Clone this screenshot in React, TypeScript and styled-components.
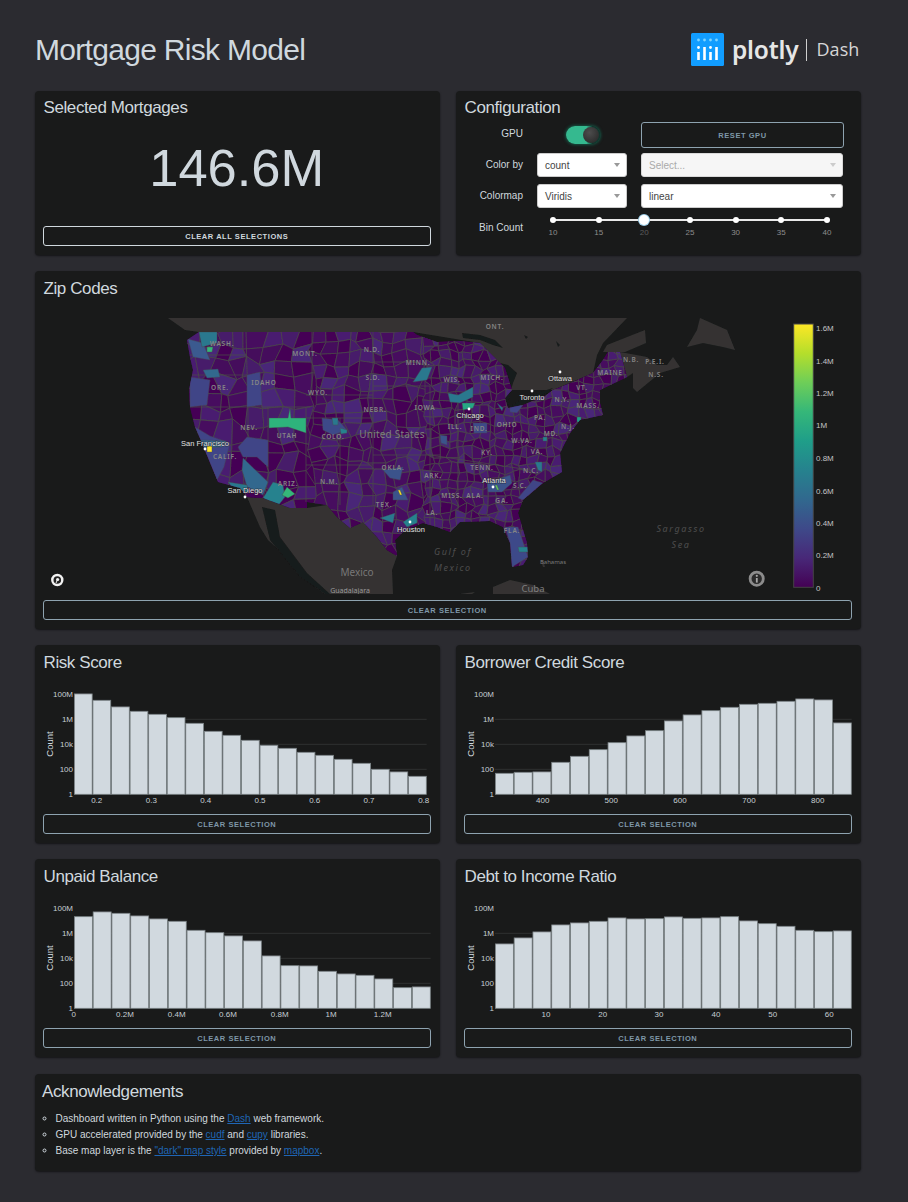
import React, { useMemo } from 'react';
import styled, { createGlobalStyle } from 'styled-components';

const FONT = `"Liberation Sans", Arial, sans-serif`;
const TEXT = '#d0d8de';

const GlobalStyle = createGlobalStyle`
  html, body {
    margin: 0;
    padding: 0;
    background: #2b2b30;
    font-family: ${FONT};
    color: ${TEXT};
  }
`;

const Page = styled.div`
  box-sizing: border-box;
  width: 908px;
  min-height: 1202px;
  padding: 33px 47.5px 31px 35px;
`;

const Header = styled.header`
  display: flex;
  align-items: center;
  justify-content: space-between;
  height: 33px;
  margin-bottom: 25px;
`;

const PageTitle = styled.h1`
  margin: 0;
  font-size: 30px;
  font-weight: 400;
  letter-spacing: -0.7px;
  color: ${TEXT};
`;

const Logo = styled.div`
  display: flex;
  align-items: center;
`;

const LogoMark = styled.svg`
  width: 33px;
  height: 33px;
  margin-right: 8px;
`;

const LogoWord = styled.span`
  font-family: "Noto Sans", sans-serif;
  font-size: 24.5px;
  line-height: 33px;
  font-weight: 600;
  letter-spacing: -0.2px;
  color: #e6e6e6;
`;

const LogoDivider = styled.span`
  width: 1px;
  height: 22px;
  margin: 0 9px 0 8px;
  background: #cfcfcf;
`;

const LogoProduct = styled.span`
  font-family: "Open Sans", sans-serif;
  font-size: 18px;
  line-height: 33px;
  color: #d6d6d6;
  letter-spacing: 0.1px;
  margin-right: 1px;
`;

const Grid = styled.main`
  display: grid;
  grid-template-columns: 404.5px 404.5px;
  gap: 16px 16.5px;
`;

const Card = styled.section<{ $wide?: boolean; $height: number }>`
  box-sizing: border-box;
  grid-column: ${({ $wide }) => ($wide ? '1 / span 2' : 'auto')};
  height: ${({ $height }) => $height}px;
  padding: 0 9px 0 8px;
  display: flex;
  flex-direction: column;
  background: #191a1a;
  border-radius: 4px;
  box-shadow: 0 1px 2px rgba(0, 0, 0, 0.55);
`;

const CardTitle = styled.h4<{ $low?: boolean }>`
  margin: 0;
  height: 32px;
  padding-left: 0.5px;
  font-size: 17px;
  line-height: ${({ $low }) => ($low ? 36 : 34)}px;
  font-weight: 400;
  letter-spacing: -0.4px;
  color: ${TEXT};
  flex: none;
`;

const BigNumber = styled.div`
  flex: 1;
  display: flex;
  align-items: center;
  justify-content: center;
  padding-bottom: 14px;
  font-size: 52.5px;
  color: ${TEXT};
`;

const ActionButton = styled.button<{ $muted?: boolean; $height?: number; $bottom?: number }>`
  box-sizing: border-box;
  display: block;
  width: 100%;
  height: ${({ $height }) => $height ?? 20}px;
  margin-bottom: ${({ $bottom }) => $bottom ?? 0}px;
  padding: 0;
  flex: none;
  background: transparent;
  border: 1px solid ${({ $muted }) => ($muted ? '#8ea3b0' : '#d0d8de')};
  border-radius: 3px;
  font-family: ${FONT};
  font-size: 7.5px;
  font-weight: 700;
  letter-spacing: 0.55px;
  text-transform: uppercase;
  color: ${({ $muted }) => ($muted ? '#7f97a8' : '#d0d8de')};
`;

const ConfigGrid = styled.div`
  margin-top: -1px;
  display: grid;
  grid-template-columns: 58px 90px 203px;
  grid-template-rows: repeat(4, 31px);
  column-gap: 14px;
  padding-left: 1px;
`;

const RowLabel = styled.label<{ $lh?: number }>`
  font-size: 10px;
  line-height: ${({ $lh }) => $lh ?? 24}px;
  text-align: right;
  white-space: nowrap;
  color: ${TEXT};
`;

const ToggleCell = styled.div`
  display: flex;
  justify-content: center;
  padding: 4px 0 0 2px;
`;

const Toggle = styled.span`
  position: relative;
  box-sizing: border-box;
  display: block;
  width: 34px;
  height: 18px;
  border-radius: 9px;
  background: linear-gradient(90deg, #35b98f 0 60%, #0e3a30 78%);
  box-shadow: 0 0 3px 1px rgba(20, 110, 85, 0.7);
`;

const ToggleKnob = styled.span`
  position: absolute;
  top: 1px;
  right: 1px;
  width: 16px;
  height: 16px;
  border-radius: 50%;
  background: radial-gradient(circle at 40% 35%, #4d4d4d, #232323);
`;

const SelectBox = styled.div<{ $disabled?: boolean; $long?: boolean }>`
  box-sizing: border-box;
  display: flex;
  align-items: center;
  justify-content: space-between;
  width: ${({ $long }) => ($long ? '202px' : '100%')};
  height: 24px;
  padding: 0 6px 0 7px;
  font-size: 10px;
  background: ${({ $disabled }) => ($disabled ? '#f6f6f6' : '#fff')};
  border: 1px solid ${({ $disabled }) => ($disabled ? '#d9d9d9' : '#ccc')};
  border-radius: 3px;
  color: ${({ $disabled }) => ($disabled ? '#aaa' : '#444')};

  &::after {
    content: '';
    border-style: solid;
    border-width: 4px 3.5px 0;
    border-color: ${({ $disabled }) => ($disabled ? '#ccc' : '#999')} transparent transparent;
  }
`;

const SliderCell = styled.div`
  grid-column: 2 / span 2;
  padding: 5px 17px 0 16px;
`;

const SliderStops = styled.div`
  position: relative;
  display: flex;
  justify-content: space-between;
  height: 1px;

  &::before {
    content: '';
    position: absolute;
    left: 0;
    right: 0;
    top: -1px;
    height: 2px;
    background: #e9e9e9;
  }
`;

const SliderStop = styled.div`
  position: relative;
  width: 0;
`;

const SliderDot = styled.span<{ $active?: boolean }>`
  position: absolute;
  box-sizing: border-box;
  width: ${({ $active }) => ($active ? 10 : 6)}px;
  height: ${({ $active }) => ($active ? 10 : 6)}px;
  left: ${({ $active }) => ($active ? -5 : -3)}px;
  top: ${({ $active }) => ($active ? -5.5 : -3.5)}px;
  border-radius: 50%;
  background: #fff;
  box-shadow: ${({ $active }) => ($active ? '0 0 0 1px #9fd0ea' : 'none')};
`;

const SliderMark = styled.span<{ $active?: boolean }>`
  position: absolute;
  top: 8px;
  left: -10px;
  width: 20px;
  text-align: center;
  font-size: 8px;
  line-height: 10px;
  color: ${({ $active }) => ($active ? '#5c5c5c' : '#8d8d8d')};
`;

const MapFrame = styled.svg`
  display: block;
  width: 808.5px;
  height: 276px;
  margin-top: 15px;
  margin-bottom: 6px;
  flex: none;
`;

const ChartFrame = styled.svg`
  display: block;
  width: 388.5px;
  height: 124px;
  margin-top: 7px;
  margin-bottom: 6px;
  flex: none;
  overflow: visible;
`;

const AckCard = styled.section`
  grid-column: 1 / span 2;
  box-sizing: border-box;
  height: 97px;
  margin-top: 1px;
  padding: 1px 7px 0;
  background: #191a1a;
  border-radius: 4px;
  box-shadow: 0 1px 2px rgba(0, 0, 0, 0.55);
`;

const AckTitle = styled(CardTitle)`
  padding-left: 0;
`;

const AckList = styled.ul`
  margin: 4px 0 0;
  padding: 0 0 0 13.5px;
  list-style: circle;
  font-size: 10px;
  line-height: 16px;
  color: ${TEXT};
`;

const AckLink = styled.a`
  color: #1f66b5;
  text-decoration: underline;
`;

const VIRIDIS = ['#440154', '#482878', '#3e4989', '#31688e', '#26828e', '#1f9e89', '#35b779', '#6ece58', '#b5de2b', '#fde725'];

const US_OUTLINE =
  '199,332 187,340 190,357 193,370 189,390 190,407 195,427 202,443 210,463 218,482 240,488 247,497 263,498 290,508 307,508 307,502 327,505 337,517 350,528 363,522 377,537 387,550 397,556 395,540 405,530 423,523 437,527 450,532 460,522 490,521 503,527 510,543 512,567 523,565 528,557 527,543 518,513 523,500 543,483 562,472 560,453 570,433 580,420 603,415 600,403 600,390 627,377 620,352 608,352 603,360 593,373 573,382 553,390 545,396 523,405 508,408 505,398 512,390 505,368 480,343 460,341 437,342 417,335 413,332';

const LAND = [
  // canada
  '168,318 185,330 199,332 413,332 480,343 512,390 553,390 593,373 597,355 603,343 627,318',
  '603,352 607,345 645,330 646,343 625,352',
  '620,352 647,357 657,365 667,365 673,357 680,367 660,373 637,392 633,388 633,373 627,377',
  '700,318 727,330 735,350 723,347 703,343 687,347 697,330',
  // mexico with baja
  '247,497 263,498 290,508 307,508 327,505 337,517 350,528 363,522 377,537 387,550 397,556 392,570 393,594 325,594 303,578 288,558 268,540 260,527',
  // cuba, yucatan, bahamas
  '493,587 510,580 533,585 550,594 493,594',
  '460,594 475,592 472,594',
  '541,560 543,560 545,567 543,567',
];

const WATER = [
  // superior, huron, erie and ontario
  '462,333 480,335 495,340 503,348 493,345 480,340 463,338',
  '500,363 508,365 517,373 513,383 510,393 508,405 505,408 504,397 507,383 505,373',
  '508,408 520,400 530,395 553,388 547,393 527,402 515,408',
  // small lakes up north
  '556,341 560,345 558,347',
  '524,335 528,337 526,339',
  // gulf of california
  '262,507 275,510 280,537 307,573 330,594 325,594 300,577 270,540',
];

const PATCHES: [string, string][] = [
  ['190,377 210,380 207,405 190,407', '#414487'],
  ['188,339 203,343 210,360 193,357', '#3b5a8f'],
  ['199,332 217,332 217,343 202,347', '#2a788e'],
  ['207,347 213,347 212,352 207,352', '#35b779'],
  ['203,370 218,369 220,377 207,378', '#31688e'],
  ['247,375 260,372 262,405 247,407', '#414487'],
  ['195,427 210,436 230,443 224,467 217,480 210,463', '#414487'],
  ['238,447 247,437 268,440 268,467 257,457 243,457', '#414487'],
  ['243,458 268,482 263,495 247,487 242,470', '#31688e'],
  ['200,440 226,441 222,447 204,448', '#31688e'],
  ['207,446 212,446 212,452 207,452', '#fde725'],
  ['228,482 247,485 248,493 232,487', '#2a788e'],
  ['269,418 288,418 290,408 291,418 306,418 306,433 288,427 269,428', '#2eb37c'],
  ['263,498 273,482 283,485 285,497 277,507', '#26828e'],
  ['282,495 287,487 295,494 288,498', '#35b779'],
  ['322,418 338,420 347,430 333,435 323,430', '#3e4989'],
  ['332,418 338,418 338,425 333,425', '#2a788e'],
  ['340,428 347,430 347,433 341,434', '#26828e'],
  ['413,382 422,368 432,367 427,380', '#2a788e'],
  ['448,393 458,395 473,387 473,397 460,403 450,402', '#2a788e'],
  ['462,403 475,403 473,408 463,410', '#26a784'],
  ['440,435 447,436 447,445 441,443', '#3b528b'],
  ['473,423 487,423 487,433 474,433', '#3e4989'],
  ['383,470 403,467 400,480 390,478', '#3b528b'],
  ['393,492 402,487 408,500 393,500', '#3b528b'],
  ['398,490 400,490 402,495 400,495', '#fde725'],
  ['380,518 395,513 393,523', '#2a788e'],
  ['403,522 417,513 417,523 407,527', '#26828e'],
  ['487,483 510,475 512,483 502,492 488,492', '#3b528b'],
  ['495,485 497,485 499,490 497,490', '#5ec962'],
  ['535,462 542,462 542,472 538,470', '#2a788e'],
  ['523,500 543,483 533,480 518,498', '#414487'],
  ['505,527 518,527 528,557 512,567 510,543', '#3e4989'],
  ['518,547 528,547 528,552 519,552', '#26828e'],
  ['577,417 581,417 581,422 577,422', '#1f9e89'],
  ['543,437 547,437 547,441 543,441', '#26828e'],
  ['497,403 503,408 502,411', '#2a788e'],
  ['510,405 523,405 517,413 510,412', '#414487'],
];

const BORDERS = [
  '246,332 248,407', '190,407 310,407', '248,407 248,447 268,467', '268,407 268,482 263,498', '306,408 306,502',
  '306,418 373,418', '306,395 373,395', '312,332 312,395', '373,332 373,505', '373,362 417,362', '373,386 430,386',
  '306,465 373,465', '340,418 340,505', '373,455 440,455', '430,386 430,525', '430,455 530,470', '458,395 458,510',
  '190,375 247,375', '190,355 247,355',
];

const STATE_LABELS: [string, number, number][] = [
  ['WASH.', 222, 343], ['MONT.', 305, 353], ['N.D.', 372, 349], ['MINN.', 418, 362], ['S.D.', 373, 377],
  ['IDAHO', 264, 382], ['ORE.', 220, 387], ['WYO.', 318, 392], ['WIS.', 452, 379], ['NEBR.', 375, 409],
  ['IOWA', 425, 407], ['NEV.', 249, 427], ['UTAH', 287, 435], ['COLO.', 333, 436], ['ILL.', 455, 426],
  ['CALIF.', 225, 456], ['OKLA.', 393, 467], ['ARK.', 433, 475], ['N.M.', 329, 481], ['ARIZ.', 288, 483],
  ['MISS.', 452, 495], ['TEX.', 384, 504], ['LA.', 432, 512], ['ALA.', 475, 495], ['GA.', 502, 500],
  ['TENN.', 482, 467], ['KY.', 487, 452], ['IND.', 479, 428], ['OHIO', 507, 424], ['MICH.', 492, 377],
  ['S.C.', 520, 485], ['N.C.', 531, 470], ['VA.', 537, 451], ['W.VA.', 522, 440], ['MD.', 551, 433],
  ['N.J.', 568, 426], ['PA.', 540, 417], ['N.Y.', 562, 399], ['MASS.', 588, 405], ['VT.', 582, 387],
  ['MAINE', 610, 372], ['N.B.', 631, 359], ['P.E.I.', 655, 361], ['N.S.', 656, 374], ['ONT.', 495, 326],
  ['FLA.', 512, 530],
];

const CITIES: [string, number, number, number, number][] = [
  ['San Francisco', 205, 446, 205, 449],
  ['San Diego', 245, 493, 245, 497],
  ['Houston', 411, 532, 410, 522],
  ['Chicago', 470, 418, 469, 409],
  ['Atlanta', 494, 483, 493, 487],
  ['Toronto', 532, 400, 532, 391],
  ['Ottawa', 560, 381, 560, 372],
];

const COLORBAR_TICKS: [string, number][] = [
  ['1.6M', 328], ['1.4M', 360.5], ['1.2M', 393], ['1M', 425], ['0.8M', 458],
  ['0.6M', 490.5], ['0.4M', 522.5], ['0.2M', 555], ['0', 587.5],
];

const CELL_PURPLES = ['#440154', '#440154', '#440154', '#450a5c', '#46105f', '#46105f', '#471a6b', '#481f70', '#482878'];

const makeCells = () => {
  let seed = 20190414;
  const rand = () => {
    seed = (seed + 0x6d2b79f5) | 0;
    let t = Math.imul(seed ^ (seed >>> 15), 1 | seed);
    t = (t + Math.imul(t ^ (t >>> 7), 61 | t)) ^ t;
    return ((t ^ (t >>> 14)) >>> 0) / 4294967296;
  };
  const cells: { points: string; fill: string }[] = [];
  const regions = [
    { x0: 184, x1: 312, y0: 328, y1: 512, step: 16 },
    { x0: 312, x1: 425, y0: 328, y1: 560, step: 12 },
    { x0: 425, x1: 632, y0: 328, y1: 572, step: 8 },
  ];
  regions.forEach(({ x0, x1, y0, y1, step }) => {
    const cols = Math.ceil((x1 - x0) / step);
    const rows = Math.ceil((y1 - y0) / step);
    const vx: [number, number][][] = [];
    for (let i = 0; i <= cols; i++) {
      vx[i] = [];
      for (let j = 0; j <= rows; j++) {
        vx[i][j] = [x0 + i * step + (rand() - 0.5) * step * 0.75, y0 + j * step + (rand() - 0.5) * step * 0.75];
      }
    }
    for (let i = 0; i < cols; i++) {
      for (let j = 0; j < rows; j++) {
        const p = [vx[i][j], vx[i + 1][j], vx[i + 1][j + 1], vx[i][j + 1]];
        cells.push({
          points: p.map((v) => `${v[0].toFixed(1)},${v[1].toFixed(1)}`).join(' '),
          fill: CELL_PURPLES[Math.floor(rand() * CELL_PURPLES.length)],
        });
      }
    }
  });
  return cells;
};

const ZipMap = () => {
  const cells = useMemo(makeCells, []);

  return (
    <MapFrame viewBox="43 318 808.5 276">
      <defs>
        <clipPath id="us-clip">
          <polygon points={US_OUTLINE} />
        </clipPath>
        <filter id="soft" x="0" y="0" width="1" height="1">
          <feGaussianBlur stdDeviation="0.5" />
        </filter>
        <linearGradient id="viridis" x1="0" y1="1" x2="0" y2="0">
          {VIRIDIS.map((c, i) => (
            <stop key={c} offset={i / (VIRIDIS.length - 1)} stopColor={c} />
          ))}
        </linearGradient>
      </defs>

      <g filter="url(#soft)">
        {LAND.map((p) => (
          <polygon key={p} points={p} fill="#343332" />
        ))}
        {WATER.map((p) => (
          <polygon key={p} points={p} fill="#191a1a" />
        ))}
        <polygon points={US_OUTLINE} fill="#440154" />
        <g clipPath="url(#us-clip)">
          {cells.map((c) => (
            <polygon key={c.points} points={c.points} fill={c.fill} stroke="#4a484b" strokeWidth="0.8" />
          ))}
          {BORDERS.map((b) => (
            <polyline key={b} points={b} fill="none" stroke="#4a4a4a" strokeWidth="0.8" />
          ))}
          {PATCHES.map(([p, fill]) => (
            <polygon key={p} points={p} fill={fill} stroke="#4a484b" strokeWidth="0.4" />
          ))}
        </g>
      </g>

      <g fontFamily='"Noto Sans", sans-serif' fontSize="6.5" fontWeight="600" letterSpacing="0.8" fill="#858585" textAnchor="middle">
        {STATE_LABELS.map(([t, x, y]) => (
          <text key={t} x={x} y={y + 2.5}>
            {t}
          </text>
        ))}
      </g>
      <g fontFamily='"Noto Sans", sans-serif' textAnchor="middle">
        <text x="392" y="438" fontSize="10" fill="#7f7f7f" letterSpacing="0.2">United States</text>
        <text x="357" y="576" fontSize="10" fill="#787878">Mexico</text>
        <text x="350" y="593" fontSize="7" fill="#9a9a9a">Guadalajara</text>
        <text x="533" y="592" fontSize="9.5" fill="#7f7f7f">Cuba</text>
        <text x="553" y="564" fontSize="6" fill="#7a7a7a">Bahamas</text>
        <g fontSize="9" fontStyle="italic" fill="#4e4e4e" letterSpacing="1.6">
          <text x="453" y="555">Gulf of</text>
          <text x="453" y="571">Mexico</text>
          <text x="681" y="532">Sargasso</text>
          <text x="681" y="548">Sea</text>
        </g>
      </g>

      <g fontFamily={FONT} fontSize="7.5" fill="#e0e0e0" textAnchor="middle">
        {CITIES.map(([t, x, y, dx, dy]) => (
          <g key={t}>
            <circle cx={dx} cy={dy} r="1.4" fill="#fff" />
            <text x={x} y={y} stroke="#1c1c1c" strokeWidth="1.2" strokeOpacity="0.6" paintOrder="stroke">
              {t}
            </text>
          </g>
        ))}
      </g>

      <circle cx="57.3" cy="580" r="5" fill="#232323" stroke="#f2f2f2" strokeWidth="2.4" />
      <circle cx="57.6" cy="579.5" r="1.6" fill="#f2f2f2" />
      <path d="M57.6 579.5 L56 583" stroke="#f2f2f2" strokeWidth="1" />

      <circle cx="756.7" cy="578.7" r="6.6" fill="#2b2b2b" stroke="#8c8c8c" strokeWidth="2.8" />
      <rect x="755.9" y="578" width="1.8" height="4.6" fill="#a8a8a8" />
      <circle cx="756.8" cy="575.8" r="1.1" fill="#a8a8a8" />

      <rect x="793.7" y="324" width="19.6" height="263.3" fill="url(#viridis)" stroke="#444" strokeWidth="1" />
      <g fontFamily={FONT} fontSize="8" fill="#c4c4c4">
        {COLORBAR_TICKS.map(([t, y]) => (
          <text key={t} x="816" y={y + 3}>
            {t}
          </text>
        ))}
      </g>
    </MapFrame>
  );
};

type HistogramProps = {
  logCounts: number[];
  ticks: [string, number][];
  plotRight?: number;
};

const Y_TICKS: [string, number][] = [['100M', 8], ['1M', 6], ['10k', 4], ['100', 2], ['1', 0]];
const PLOT_LEFT = 31;
const PLOT_TOP = 10.3;
const DECADE = 12.5;
const BASELINE = PLOT_TOP + DECADE * 8;

const Histogram = ({ logCounts, ticks, plotRight = 387.7 }: HistogramProps) => {
  const barWidth = (plotRight - PLOT_LEFT) / logCounts.length;

  return (
    <ChartFrame viewBox="0 0 388.5 124">
      {Y_TICKS.slice(1, 4).map(([t, d]) => (
        <line key={t} x1={PLOT_LEFT} x2={plotRight} y1={BASELINE - d * DECADE} y2={BASELINE - d * DECADE} stroke="#2f3131" strokeWidth="1" />
      ))}
      {logCounts.map((v, i) => {
        const h = v * DECADE;
        return (
          <rect
            key={i}
            x={PLOT_LEFT + i * barWidth + 0.4}
            y={BASELINE - h}
            width={barWidth - 0.8}
            height={h}
            fill="#d1d9df"
            stroke="#7b8386"
            strokeWidth="0.8"
          />
        );
      })}
      <g fontFamily={FONT} fontSize="8" fill="#c6ced3">
        {Y_TICKS.map(([t, d]) => (
          <text key={t} x="30" y={BASELINE - d * DECADE + 3} textAnchor="end">
            {t}
          </text>
        ))}
        {ticks.map(([t, x]) => (
          <text key={t} x={x} y="119" textAnchor="middle">
            {t}
          </text>
        ))}
      </g>
      <text
        x="9.5"
        y="60"
        fontFamily={FONT}
        fontSize="9.5"
        fill="#d0d8de"
        textAnchor="middle"
        transform="rotate(-90 9.5 60)"
      >
        Count
      </text>
    </ChartFrame>
  );
};

const RISK = [8.03, 7.52, 6.99, 6.64, 6.4, 6.13, 5.68, 5.04, 4.72, 4.32, 3.92, 3.68, 3.36, 3.12, 2.8, 2.48, 2.0, 1.79, 1.44];
const CREDIT = [1.68, 1.76, 1.79, 2.56, 3.04, 3.57, 4.13, 4.67, 5.09, 5.87, 6.35, 6.69, 6.96, 7.2, 7.28, 7.44, 7.63, 7.55, 5.71];
const BALANCE = [7.33, 7.71, 7.6, 7.39, 7.15, 6.96, 6.24, 6.05, 5.79, 5.39, 4.19, 3.41, 3.39, 2.96, 2.75, 2.64, 2.35, 1.65, 1.71];
const DTI = [5.15, 5.63, 6.11, 6.67, 6.83, 6.96, 7.23, 7.15, 7.17, 7.31, 7.2, 7.23, 7.33, 6.99, 6.77, 6.56, 6.24, 6.13, 6.19];

const HISTOGRAMS: { title: string; logCounts: number[]; ticks: [string, number][]; plotRight?: number }[] = [
  {
    title: 'Risk Score',
    logCounts: RISK,
    plotRight: 383.7,
    ticks: [['0.2', 53.7], ['0.3', 108.3], ['0.4', 162.7], ['0.5', 217], ['0.6', 271.7], ['0.7', 326], ['0.8', 380.7]],
  },
  {
    title: 'Borrower Credit Score',
    logCounts: CREDIT,
    ticks: [['400', 78.7], ['500', 147.3], ['600', 216], ['700', 285], ['800', 353.7]],
  },
  {
    title: 'Unpaid Balance',
    logCounts: BALANCE,
    ticks: [['0', 30.7], ['0.2M', 82], ['0.4M', 133.7], ['0.6M', 185], ['0.8M', 236.7], ['1M', 288], ['1.2M', 339.7]],
  },
  {
    title: 'Debt to Income Ratio',
    logCounts: DTI,
    ticks: [['10', 82], ['20', 138.7], ['30', 195], ['40', 252], ['50', 308.7], ['60', 365.3]],
  },
];

const BIN_STOPS = [10, 15, 20, 25, 30, 35, 40];

const LOGO_COLUMNS: { x: number; tall: boolean }[] = [
  { x: 7.5, tall: false },
  { x: 13.5, tall: true },
  { x: 19.5, tall: false },
  { x: 25.5, tall: true },
];

const App = () => (
  <Page>
    <GlobalStyle />
    <Header>
      <PageTitle>Mortgage Risk Model</PageTitle>
      <Logo>
        <LogoMark viewBox="0 0 33 33">
          <rect width="33" height="33" rx="1.5" fill="#119dff" />
          {LOGO_COLUMNS.map(({ x, tall }) => (
            <g key={x}>
              <circle cx={x} cy="7" r="1.4" fill="#7fd4ff" />
              {!tall && <circle cx={x} cy="14.5" r="1.4" fill="#fff" />}
              <rect x={x - 1.3} y={tall ? 14 : 19} width="2.6" height={tall ? 13 : 8} fill="#fff" />
            </g>
          ))}
        </LogoMark>
        <LogoWord>plotly</LogoWord>
        <LogoDivider />
        <LogoProduct>Dash</LogoProduct>
      </Logo>
    </Header>

    <Grid>
      <Card $height={164}>
        <CardTitle>Selected Mortgages</CardTitle>
        <BigNumber>146.6M</BigNumber>
        <ActionButton $bottom={9}>Clear All Selections</ActionButton>
      </Card>

      <Card $height={164}>
        <CardTitle>Configuration</CardTitle>
        <ConfigGrid>
          <RowLabel>GPU</RowLabel>
          <ToggleCell>
            <Toggle>
              <ToggleKnob />
            </Toggle>
          </ToggleCell>
          <ActionButton $muted $height={26}>Reset GPU</ActionButton>

          <RowLabel>Color by</RowLabel>
          <SelectBox>count</SelectBox>
          <SelectBox $disabled $long>Select...</SelectBox>

          <RowLabel>Colormap</RowLabel>
          <SelectBox>Viridis</SelectBox>
          <SelectBox $long>linear</SelectBox>

          <RowLabel $lh={26}>Bin Count</RowLabel>
          <SliderCell>
            <SliderStops>
              {BIN_STOPS.map((s) => (
                <SliderStop key={s}>
                  <SliderDot $active={s === 20} />
                  <SliderMark $active={s === 20}>{s}</SliderMark>
                </SliderStop>
              ))}
            </SliderStops>
          </SliderCell>
        </ConfigGrid>
      </Card>

      <Card $wide $height={358}>
        <CardTitle $low>Zip Codes</CardTitle>
        <ZipMap />
        <ActionButton $muted>Clear Selection</ActionButton>
      </Card>

      {HISTOGRAMS.map(({ title, logCounts, ticks, plotRight }) => (
        <Card key={title} $height={198}>
          <CardTitle $low>{title}</CardTitle>
          <Histogram logCounts={logCounts} ticks={ticks} plotRight={plotRight} />
          <ActionButton $muted>Clear Selection</ActionButton>
        </Card>
      ))}

      <AckCard>
        <AckTitle>Acknowledgements</AckTitle>
        <AckList>
          <li>
            Dashboard written in Python using the <AckLink href="#dash">Dash</AckLink> web framework.
          </li>
          <li>
            GPU accelerated provided by the <AckLink href="#cudf">cudf</AckLink> and{' '}
            <AckLink href="#cupy">cupy</AckLink> libraries.
          </li>
          <li>
            Base map layer is the <AckLink href="#dark">"dark" map style</AckLink> provided by{' '}
            <AckLink href="#mapbox">mapbox</AckLink>.
          </li>
        </AckList>
      </AckCard>
    </Grid>
  </Page>
);

export default App;
